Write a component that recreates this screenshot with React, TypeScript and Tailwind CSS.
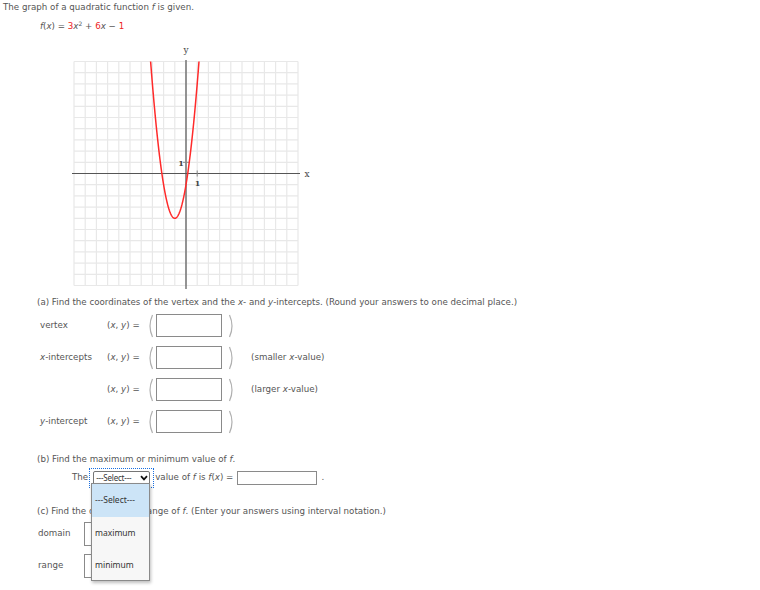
import React from "react";

const U = 11.2;
const CX = 186;
const CY = 173.5;

function Graph() {
  const lines: React.ReactElement[] = [];
  for (let k = -10; k <= 10; k++) {
    const x = CX + k * U;
    const y = CY + k * U;
    lines.push(<line key={"v" + k} x1={x} y1={CY - 10 * U} x2={x} y2={CY + 10 * U} stroke="#e8e8e8" strokeWidth={1.2} />);
    lines.push(<line key={"h" + k} x1={CX - 10 * U} y1={y} x2={CX + 10 * U} y2={y} stroke="#e8e8e8" strokeWidth={1.2} />);
  }
  const pts: string[] = [];
  for (let x = -3.3; x <= 1.3; x += 0.02) {
    const y = 3 * x * x + 6 * x - 1;
    pts.push(`${(CX + x * U).toFixed(2)},${(CY - y * U).toFixed(2)}`);
  }
  return (
    <svg className="block ml-[60px] mt-[7px]" width={260} height={250} viewBox="60 40 260 250">
      <defs>
        <clipPath id="gclip">
          <rect x={CX - 10 * U} y={CY - 10 * U} width={20 * U} height={20 * U} />
        </clipPath>
      </defs>
      {lines}
      <line x1={72} y1={CY} x2={300} y2={CY} stroke="#555" strokeWidth={1.2} />
      <line x1={CX} y1={60} x2={CX} y2={289} stroke="#555" strokeWidth={1.2} />
      <line x1={CX + U} y1={CY - 3} x2={CX + U} y2={CY + 3} stroke="#888" strokeWidth={1} />
      <line x1={CX - 3} y1={CY - U} x2={CX + 3} y2={CY - U} stroke="#888" strokeWidth={1} />
      <polyline points={pts.join(" ")} fill="none" stroke="#ff2a2a" strokeWidth={1.5} clipPath="url(#gclip)" />
      <text x={CX} y={53} textAnchor="middle" fontFamily="DejaVu Serif, serif" fontSize={9} fill="#444">y</text>
      <text x={307} y={177} textAnchor="middle" fontFamily="DejaVu Serif, serif" fontSize={9} fill="#444">x</text>
      <text x={181} y={166} textAnchor="middle" fontFamily="DejaVu Serif, serif" fontSize={8} fontWeight="bold" fill="#444">1</text>
      <text x={197.5} y={186} textAnchor="middle" fontFamily="DejaVu Serif, serif" fontSize={8} fontWeight="bold" fill="#444">1</text>
    </svg>
  );
}

function Paren({ right }: { right?: boolean }) {
  return (
    <svg width={7} height={24} viewBox="0 0 7 24" className="block">
      {right ? (
        <path d="M1.5 1 Q6.5 12 1.5 23" fill="none" stroke="#b0b0b0" strokeWidth={1.2} />
      ) : (
        <path d="M5.5 1 Q0.5 12 5.5 23" fill="none" stroke="#b0b0b0" strokeWidth={1.2} />
      )}
    </svg>
  );
}

function XY() {
  return (
    <span className="w-[40px] shrink-0 whitespace-nowrap">
      (<i>x</i>, <i>y</i>) =
    </span>
  );
}

function Row({ label, note, first }: { label?: React.ReactNode; note?: React.ReactNode; first?: boolean }) {
  return (
    <div className={`flex items-center h-[23px] ${first ? "mt-[5px]" : "mt-[9px]"}`}>
      <span className="w-[67px] pl-[40px] box-content shrink-0 whitespace-nowrap">{label}</span>
      <XY />
      <Paren />
      <div className="w-[66px] h-[23px] border border-[#8a8a8a] bg-white ml-[2px]" />
      <div className="ml-[6px]">
        <Paren right />
      </div>
      {note && <span className="ml-[16px] whitespace-nowrap">{note}</span>}
    </div>
  );
}

export default function App() {
  return (
    <div className="relative w-[760px] h-[590px] overflow-hidden bg-white text-[#555] text-[8.7px] font-['DejaVu_Sans',sans-serif]">
      <div className="pl-[3px] h-[14px] leading-[14px]">
        The graph of a quadratic function <i>f</i> is given.
      </div>
      <div className="pl-[40px] mt-[5px] h-[14px] leading-[14px]">
        <i>f</i>(<i>x</i>) = <span className="text-[#ee2222]">3</span>
        <i>x</i>
        <sup className="text-[6px]">2</sup> + <span className="text-[#ee2222]">6</span>
        <i>x</i> − <span className="text-[#ee2222]">1</span>
      </div>
      <Graph />
      <div className="pl-[37px] mt-[5px] h-[14px] leading-[14px] whitespace-nowrap">
        (a) Find the coordinates of the vertex and the <i>x</i>- and <i>y</i>-intercepts. (Round your answers to one decimal place.)
      </div>
      <Row label="vertex" first />
      <Row label={<><i>x</i>-intercepts</>} note={<>(smaller <i>x</i>-value)</>} />
      <Row note={<>(larger <i>x</i>-value)</>} />
      <Row label={<><i>y</i>-intercept</>} />

      <div className="pl-[37px] mt-[19px] h-[14px] leading-[14px]">
        (b) Find the maximum or minimum value of <i>f</i>.
      </div>
      <div className="mt-[5px] h-[14px] flex items-center pl-[72px] whitespace-nowrap">
        <span>The</span>
        <div className="ml-[1px] px-[3px] py-[2px] my-[-2px] border border-dotted border-[#1a6fe0]">
          <div className="w-[57px] h-[14px] border border-[#767676] rounded-[2px] bg-white flex items-center justify-between pl-[2px] pr-[1px] text-[#333] text-[8px] font-['Noto_Sans',sans-serif]">
            <span className="tracking-[-0.2px]">---Select---</span>
            <svg width={8} height={6} viewBox="0 0 8 6">
              <path d="M1 1.2 L4 4.4 L7 1.2" fill="none" stroke="#111" strokeWidth={1.7} />
            </svg>
          </div>
        </div>
        <span className="ml-[1px]">
          value of <i>f</i> is <i>f</i>(<i>x</i>) =
        </span>
        <div className="ml-[4px] w-[80px] h-[14px] border border-[#8a8a8a] bg-white" />
        <span className="ml-[4px]">.</span>
      </div>

      <div className="pl-[37px] mt-[19px] h-[14px] leading-[14px] whitespace-nowrap">
        (c) Find the domain and range of <i>f</i>. (Enter your answers using interval notation.)
      </div>
      <div className="mt-[4px] h-[24px] flex items-center">
        <span className="pl-[38px] w-[46px] box-content">domain</span>
        <div className="w-[60px] h-[24px] border border-[#8a8a8a] bg-white" />
      </div>
      <div className="mt-[8px] h-[24px] flex items-center">
        <span className="pl-[38px] w-[46px] box-content">range</span>
        <div className="w-[60px] h-[24px] border border-[#8a8a8a] bg-white" />
      </div>

      <div className="absolute left-[91px] top-[483px] w-[59px] h-[98px] bg-[#f7f7f7] border border-[#8a8a8a] shadow-[1px_2px_3px_rgba(0,0,0,0.25)] text-[#333] text-[8.5px] font-['Noto_Sans',sans-serif]">
        <div className="h-[33px] bg-[#cce4f7] flex items-center pl-[3px]">---Select---</div>
        <div className="h-[32px] flex items-center pl-[3px]">maximum</div>
        <div className="h-[32px] flex items-center pl-[3px]">minimum</div>
      </div>
    </div>
  );
}
